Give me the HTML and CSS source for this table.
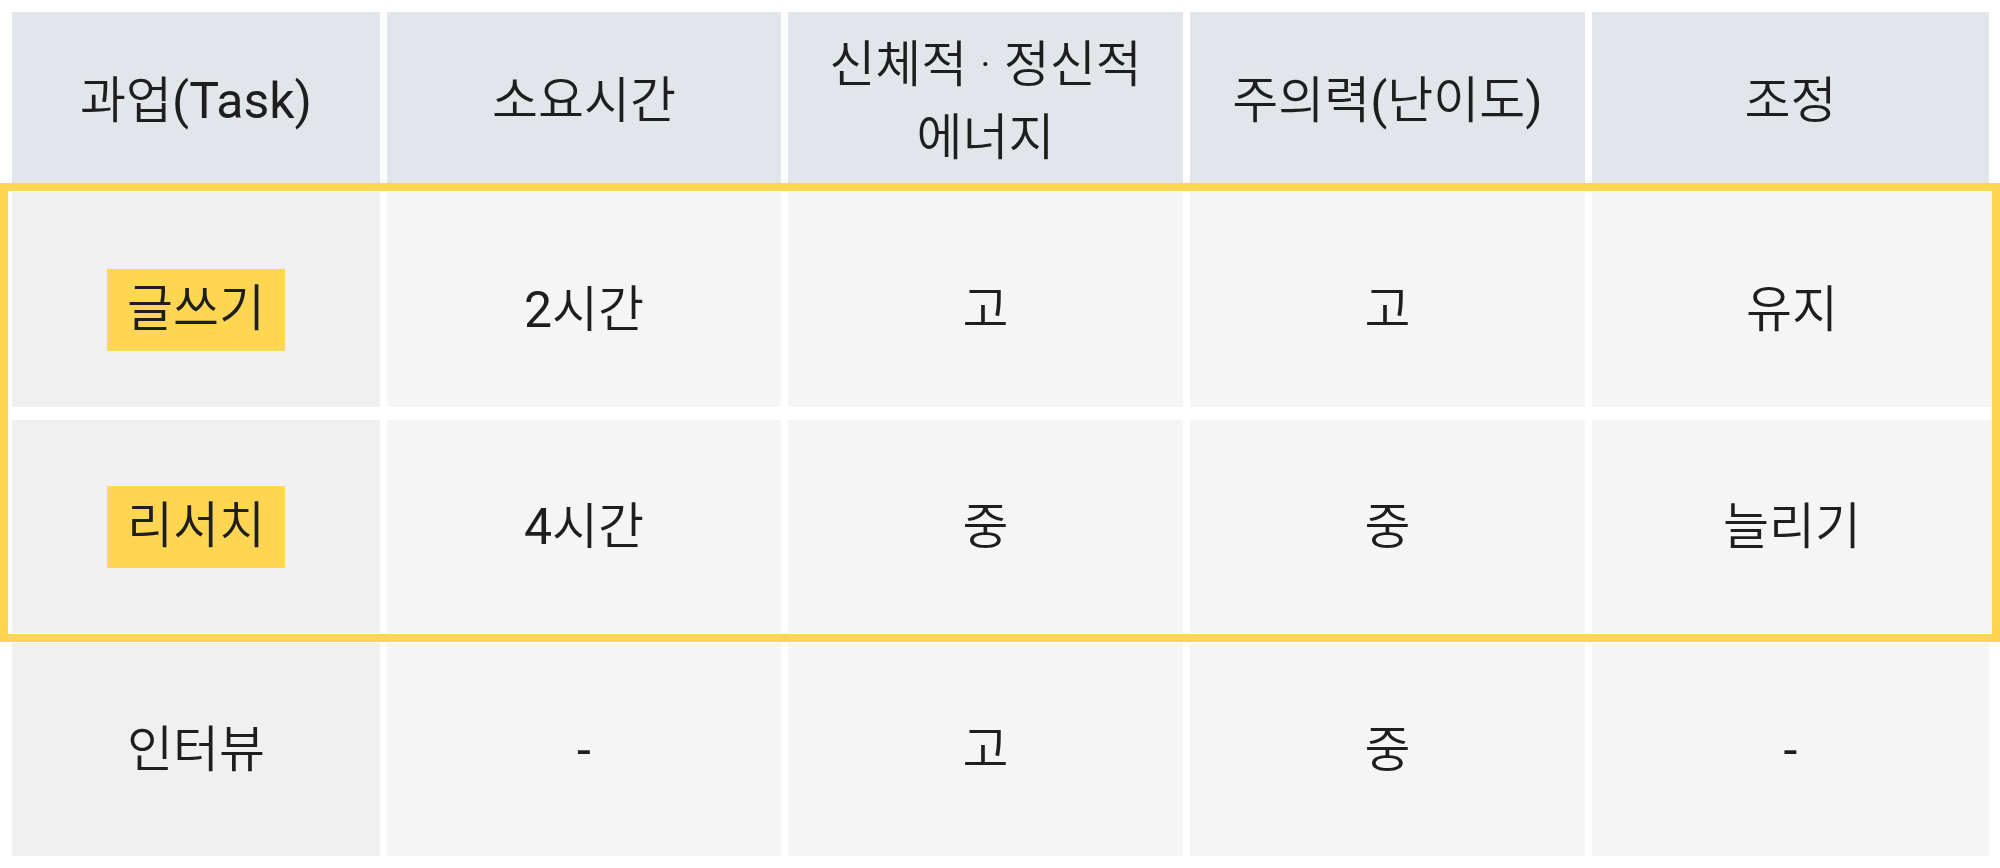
FILE: index.html
```html
<!DOCTYPE html>
<html lang="ko">
<head>
<meta charset="utf-8">
<title>과업 조정표</title>
<link rel="stylesheet" href="styles.css">
</head>
<body>
<div class="table">
  <div class="row head">
    <div class="cell">과업<span class="lat">(Task)</span></div>
    <div class="cell">소요시간</div>
    <div class="cell">신체적 · 정신적<br>에너지</div>
    <div class="cell">주의력<span class="lat">(</span>난이도<span class="lat">)</span></div>
    <div class="cell">조정</div>
  </div>
  <div class="highlight">
    <div class="row body first">
      <div class="cell task"><span class="chip">글쓰기</span></div>
      <div class="cell"><span class="lat">2</span>시간</div>
      <div class="cell">고</div>
      <div class="cell">고</div>
      <div class="cell">유지</div>
    </div>
    <div class="row body second">
      <div class="cell task"><span class="chip">리서치</span></div>
      <div class="cell"><span class="lat">4</span>시간</div>
      <div class="cell">중</div>
      <div class="cell">중</div>
      <div class="cell">늘리기</div>
    </div>
  </div>
  <div class="row body last">
    <div class="cell task">인터뷰</div>
    <div class="cell"><span class="lat">-</span></div>
    <div class="cell">고</div>
    <div class="cell">중</div>
    <div class="cell"><span class="lat">-</span></div>
  </div>
</div>
</body>
</html>
```

FILE: styles.css
```css
html, body {
  margin: 0;
  padding: 0;
  background: #ffffff;
}

body {
  font-family: Roboto, "Noto Sans CJK KR", sans-serif;
  font-size: 50px;
  font-weight: 350;
  color: #1e1e1e;
  width: 2000px;
  height: 868px;
  overflow: hidden;
}

.lat {
  font-weight: 400;
}

.table {
  display: flex;
  flex-direction: column;
}

.row {
  display: grid;
  grid-template-columns: 368px 394px 395px 395px 1fr;
  column-gap: 7px;
}

.cell {
  display: flex;
  align-items: center;
  justify-content: center;
  text-align: center;
  line-height: 70px;
  background: #f5f5f5;
  white-space: pre;
}

.head {
  padding: 12px 11px 0 12px;
  height: 171px;
}

.head .cell {
  background: #e2e5e9;
  line-height: 73px;
  padding-top: 8px;
  box-sizing: border-box;
}

.cell.task {
  background: #f0f0f0;
}

.highlight {
  border: 8px solid #fed651;
  padding: 1px 0 1px 4px;
  display: flex;
  flex-direction: column;
  row-gap: 13px;
}

.first {
  height: 215px;
}

.first .cell {
  padding-top: 20px;
  box-sizing: border-box;
}

.second {
  height: 213px;
}

.last {
  margin-top: 1px;
  padding: 0 11px 12px 12px;
  height: 213px;
}

.chip {
  display: inline-block;
  background: #fed651;
  padding: 7px 20px 9px;
  line-height: 66px;
}
```
